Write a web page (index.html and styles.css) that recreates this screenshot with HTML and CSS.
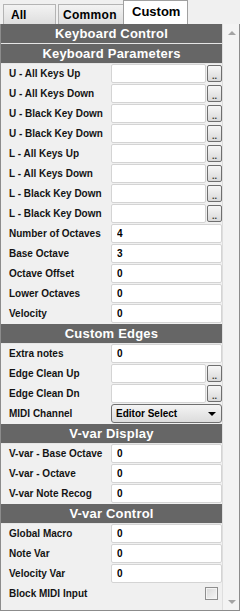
FILE: index.html
```html
<!DOCTYPE html>
<html lang="en">
<head>
    <meta charset="UTF-8">
    <meta name="viewport" content="width=device-width, initial-scale=1.0">
    <title>Keyboard Control</title>
    <link rel="stylesheet" href="styles.css">
</head>
<body>

<div class="tabs">
    <div class="tab">All</div>
    <div class="tab">Common</div>
    <div class="tab active">Custom</div>
</div>

<div class="panel">
    <div class="content">
        <div class="header">Keyboard Control</div>
        <div class="header">Keyboard Parameters</div>

        <div class="row"><span class="label">U - All Keys Up</span><input class="text short"><button class="browse">..</button></div>
        <div class="row"><span class="label">U - All Keys Down</span><input class="text short"><button class="browse">..</button></div>
        <div class="row"><span class="label">U - Black Key Down</span><input class="text short"><button class="browse">..</button></div>
        <div class="row"><span class="label">U - Black Key Down</span><input class="text short"><button class="browse">..</button></div>
        <div class="row"><span class="label">L - All Keys Up</span><input class="text short"><button class="browse">..</button></div>
        <div class="row"><span class="label">L - All Keys Down</span><input class="text short"><button class="browse">..</button></div>
        <div class="row"><span class="label">L - Black Key Down</span><input class="text short"><button class="browse">..</button></div>
        <div class="row"><span class="label">L - Black Key Down</span><input class="text short"><button class="browse">..</button></div>
        <div class="row"><span class="label">Number of Octaves</span><input class="text" value="4"></div>
        <div class="row"><span class="label">Base Octave</span><input class="text" value="3"></div>
        <div class="row"><span class="label">Octave Offset</span><input class="text" value="0"></div>
        <div class="row"><span class="label">Lower Octaves</span><input class="text" value="0"></div>
        <div class="row"><span class="label">Velocity</span><input class="text" value="0"></div>

        <div class="header">Custom Edges</div>
        <div class="row"><span class="label">Extra notes</span><input class="text" value="0"></div>
        <div class="row"><span class="label">Edge Clean Up</span><input class="text short"><button class="browse">..</button></div>
        <div class="row"><span class="label">Edge Clean Dn</span><input class="text short"><button class="browse">..</button></div>
        <div class="row"><span class="label">MIDI Channel</span><div class="select">Editor Select<span class="caret"></span></div></div>

        <div class="header">V-var Display</div>
        <div class="row"><span class="label">V-var - Base Octave</span><input class="text" value="0"></div>
        <div class="row"><span class="label">V-var - Octave</span><input class="text" value="0"></div>
        <div class="row"><span class="label">V-var Note Recog</span><input class="text" value="0"></div>

        <div class="header">V-var Control</div>
        <div class="row"><span class="label">Global Macro</span><input class="text" value="0"></div>
        <div class="row"><span class="label">Note Var</span><input class="text" value="0"></div>
        <div class="row"><span class="label">Velocity Var</span><input class="text" value="0"></div>
        <div class="row"><span class="label">Block MIDI Input</span><span class="check"></span></div>
    </div>
    <div class="scrollbar">
        <span class="arrow up"></span>
        <span class="arrow down"></span>
    </div>
</div>

</body>
</html>
```

FILE: styles.css
```css
body {
    margin: 0;
    width: 240px;
    height: 611px;
    background-color: #f0f0f0;
    font-family: "Liberation Sans", Arial, sans-serif;
    overflow: hidden;
}

/* Tab strip */
.tabs {
    display: flex;
    align-items: flex-end;
    height: 24px;
    padding-left: 3px;
}

.tab {
    box-sizing: border-box;
    height: 20px;
    padding-left: 7px;
    border: 1px solid #b4b4b4;
    border-bottom: none;
    background: linear-gradient(#f3f3f3, #dedede);
    font-size: 12px;
    font-weight: bold;
    line-height: 21px;
    color: #000;
    white-space: nowrap;
}

.tab:nth-child(1) {
    width: 53px;
}

.tab:nth-child(2) {
    width: 66px;
    margin-left: 2px;
    padding-left: 4px;
    letter-spacing: 0.3px;
}

.tab.active {
    width: 65px;
    height: 24px;
    margin-left: -1px;
    padding-left: 8px;
    background: #fff;
    border-color: #a0a0a0;
    font-size: 13px;
    line-height: 22px;
    letter-spacing: 0;
}

/* Main panel */
.panel {
    display: flex;
    height: 587px;
    box-sizing: border-box;
    border: 1px solid #8c8c8c;
    border-top: none;
}

.content {
    width: 221px;
}

.header {
    height: 19px;
    border-bottom: 1px solid #e6e6e6;
    background-color: #666;
    color: #fff;
    font-size: 13px;
    font-weight: bold;
    line-height: 19px;
    text-align: center;
    letter-spacing: 0.2px;
}

.row {
    display: flex;
    align-items: flex-start;
    height: 20px;
}

.label {
    width: 102px;
    padding-left: 8px;
    font-size: 10px;
    font-weight: bold;
    line-height: 19px;
    color: #141414;
    white-space: nowrap;
}

.text {
    box-sizing: border-box;
    width: 111px;
    height: 19px;
    margin: 0;
    padding: 0 0 0 5px;
    border: 1px solid #d4d4d4;
    border-radius: 2px;
    background-color: #fff;
    font-family: "Liberation Sans", Arial, sans-serif;
    font-size: 10px;
    font-weight: bold;
    color: #000;
}

.text.short {
    width: 95px;
}

.browse {
    box-sizing: border-box;
    width: 15px;
    height: 17px;
    margin: 1px 0 0 1px;
    padding: 0;
    border: 1px solid #6f6f6f;
    border-radius: 2px;
    background: linear-gradient(#f7f7f7, #d9d9d9);
    font-family: "Liberation Sans", Arial, sans-serif;
    font-size: 9px;
    font-weight: bold;
    line-height: 20px;
    color: #333;
}

.select {
    position: relative;
    box-sizing: border-box;
    width: 111px;
    height: 19px;
    padding-left: 4px;
    border: 1px solid #6f6f6f;
    border-radius: 3px;
    background: linear-gradient(#f4f4f4, #dcdcdc);
    font-size: 10px;
    font-weight: bold;
    line-height: 18px;
    color: #000;
}

.caret {
    position: absolute;
    right: 5px;
    top: 7px;
    border-left: 4px solid transparent;
    border-right: 4px solid transparent;
    border-top: 4px solid #000;
}

.check {
    box-sizing: border-box;
    width: 13px;
    height: 13px;
    margin: 3px 0 0 94px;
    border: 1px solid #8e8e8e;
    background: linear-gradient(135deg, #d8d8d8, #f6f6f6);
    box-shadow: inset 0 0 0 1px #f4f4f4;
}

/* Scrollbar */
.scrollbar {
    position: relative;
    width: 16px;
    border-left: 1px solid #dedede;
    background-color: #f3f3f3;
}

.arrow {
    position: absolute;
    left: 5px;
    border-left: 4px solid transparent;
    border-right: 4px solid transparent;
}

.arrow.up {
    top: 7px;
    border-bottom: 4px solid #a3a3a3;
}

.arrow.down {
    bottom: 6px;
    border-top: 4px solid #a3a3a3;
}
```
